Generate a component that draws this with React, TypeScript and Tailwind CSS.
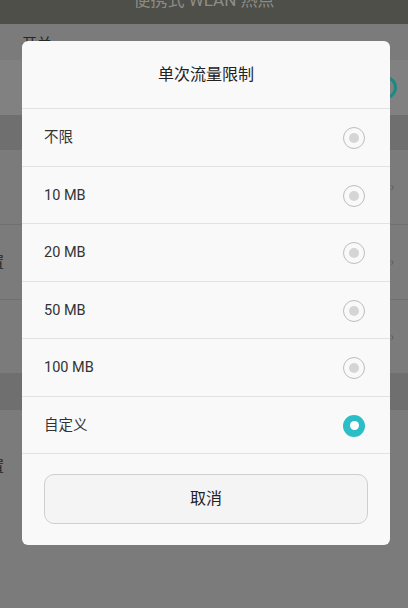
import React from "react";

const options = ["不限", "10 MB", "20 MB", "50 MB", "100 MB", "自定义"];
const selected = 5;

const Radio = ({ on }: { on: boolean }) =>
  on ? (
    <span className="flex h-[22px] w-[22px] items-center justify-center rounded-full bg-[#2cbec6]">
      <span className="h-[9px] w-[9px] rounded-full bg-white" />
    </span>
  ) : (
    <span className="flex h-[22px] w-[22px] items-center justify-center rounded-full border border-[#bdbdbd]">
      <span className="h-[10px] w-[10px] rounded-full bg-[#d5d5d5]" />
    </span>
  );

const Backdrop = () => (
  <div className="flex h-[608px] flex-col bg-[#7b7b7b] text-[#262626]">
    <div className="flex h-[24px] justify-center overflow-hidden bg-[#4f4f49]">
      <span className="-mt-[12px] text-[17px] leading-[24px] text-[#8d8d88]">便携式 WLAN 热点</span>
    </div>
    <div className="h-[36px] px-[22px] pt-[8px] text-[15px] leading-[24px]">开关</div>
    <div className="flex h-[55px] items-center justify-end bg-[#818181]">
      <span className="mr-[11px] h-[23px] w-[23px] rounded-full border-[3px] border-[#1d8a82]" />
    </div>
    <div className="h-[35px] bg-[#6f6f6f]" />
    <div className="flex h-[75px] items-center justify-end border-b border-[#707070] pr-[14px]">
      <span className="text-[12px] text-[#5c5c5c]">›</span>
    </div>
    <div className="flex h-[75px] items-center justify-between border-b border-[#707070] pr-[14px]">
      <span className="-ml-[10px] text-[14px]">置</span>
      <span className="text-[12px] text-[#5c5c5c]">›</span>
    </div>
    <div className="flex h-[73px] items-center justify-end pr-[14px]">
      <span className="text-[12px] text-[#5c5c5c]">›</span>
    </div>
    <div className="h-[37px] bg-[#6f6f6f]" />
    <div className="flex h-[112px] items-center">
      <span className="-ml-[10px] text-[14px]">置</span>
    </div>
  </div>
);

export default function App() {
  return (
    <div
      className="relative h-[608px] w-[408px] overflow-hidden"
      style={{ fontFamily: 'Roboto, "Noto Sans CJK SC", sans-serif' }}
    >
      <Backdrop />
      <div className="absolute left-[22px] top-[41px] w-[368px] overflow-hidden rounded-[6px] bg-[#f9f9f9]">
        <div className="flex h-[68px] items-center justify-center border-b border-[#e2e2e2] text-[16px] text-[#222]">
          单次流量限制
        </div>
        {options.map((o, i) => (
          <div
            key={o}
            className="flex h-[57.5px] items-center justify-between border-b border-[#e2e2e2] pl-[22px] pr-[25px] pt-[2px] text-[14.5px] text-[#333]"
          >
            <span>{o}</span>
            <Radio on={i === selected} />
          </div>
        ))}
        <div className="px-[22px] pb-[21px] pt-[20px]">
          <button className="flex h-[50px] w-full items-center justify-center rounded-[10px] border border-[#cfcfcf] bg-[#f4f4f4] text-[16px] text-[#222]">
            取消
          </button>
        </div>
      </div>
    </div>
  );
}
